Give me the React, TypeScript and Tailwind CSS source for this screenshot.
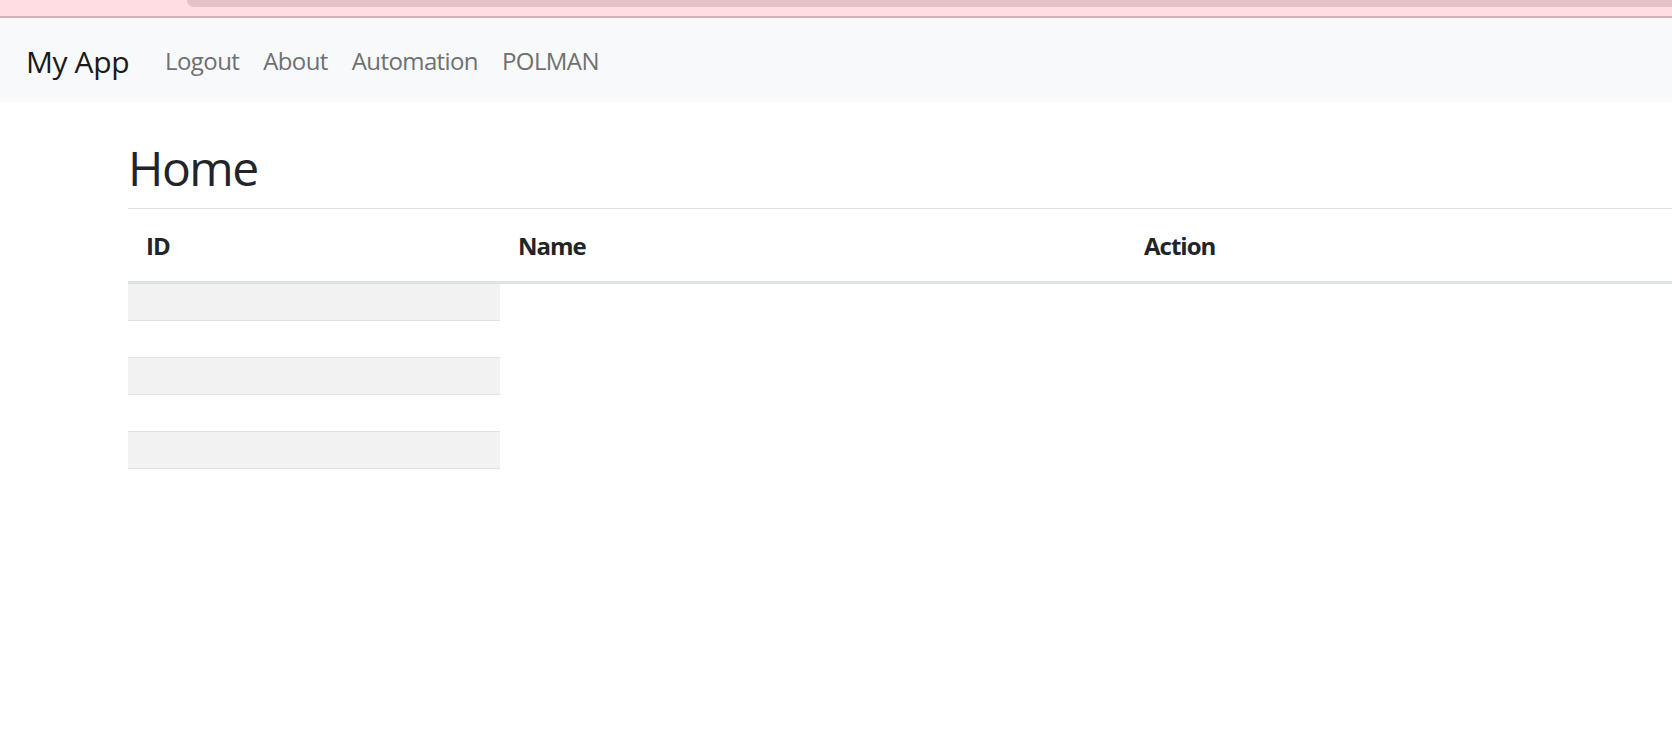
import React from 'react'

const links = ['Logout', 'About', 'Automation', 'POLMAN']
const rows = [0, 1, 2, 3, 4]

export default function App() {
  return (
    <div className="min-h-[750px] bg-white text-[#212529] font-['Open_Sans',sans-serif]">
      {/* top strip */}
      <div className="h-[18px] bg-[#ffdde3] border-b-2 border-[#d0b4b9]">
        <div className="ml-[187px] h-[7px] rounded-bl-[10px] bg-[#e3c2c7]" />
      </div>

      {/* navbar */}
      <nav className="flex h-[84px] items-center bg-[#f8f9fa] px-[26px] pt-[2px]">
        <span className="mr-[24px] text-[30px] leading-[45px] tracking-[-0.4px] text-[#1a1a1a]">My App</span>
        <ul className="flex items-center">
          {links.map(l => (
            <li key={l}>
              <a className="block px-[12px] text-[24px] leading-[36px] tracking-[-0.6px] text-[#6f7071]">{l}</a>
            </li>
          ))}
        </ul>
      </nav>

      <main className="pl-[128px]">
        <h1 className="mt-[37px] mb-[11px] text-[48px] font-medium leading-[57.6px] tracking-[-1.5px]">Home</h1>

        <div className="border-t border-[#dee2e6]">
          <div className="flex h-[75px] items-center border-b-[3px] border-[#dee2e6] pt-[2px] text-[24px] font-bold leading-[36px] tracking-[-1px]">
            <div className="w-[372px] px-[18px]">ID</div>
            <div className="w-[626px] px-[18px]">Name</div>
            <div className="flex-1 px-[18px]">Action</div>
          </div>
          {rows.map(i => (
            <div key={i} className="flex">
              <div className={`h-[37px] w-[372px] border-b border-[#dee2e6] ${i % 2 === 0 ? 'bg-[#f2f2f2]' : 'bg-white'}`} />
            </div>
          ))}
        </div>
      </main>
    </div>
  )
}
